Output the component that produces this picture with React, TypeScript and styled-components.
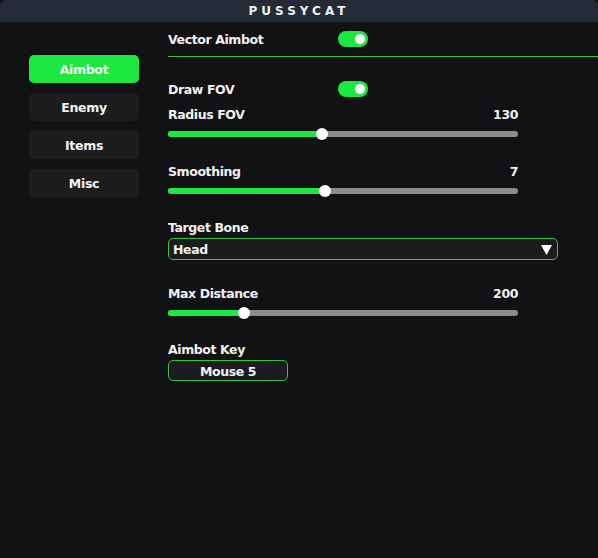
import styled, { createGlobalStyle } from "styled-components";

const GlobalStyle = createGlobalStyle`
  html, body {
    margin: 0;
    padding: 0;
    background: #121214;
  }
  body {
    font-family: "DejaVu Sans", Verdana, sans-serif;
    color: #f2f2f2;
  }
`;

const GREEN = "#1de840";

const Window = styled.div`
  width: 598px;
  height: 558px;
  display: flex;
  flex-direction: column;
  background: #121214;
  overflow: hidden;
`;

const TitleBar = styled.div`
  height: 22px;
  background: #252a37;
  border-radius: 6px 6px 0 0;
  display: flex;
  align-items: center;
  justify-content: center;
  font-size: 12px;
  font-weight: bold;
  letter-spacing: 4px;
  color: #eef0f4;
`;

const Main = styled.div`
  flex: 1;
  display: flex;
`;

const Sidebar = styled.nav`
  width: 139px;
  padding: 33px 0 0 29px;
  display: flex;
  flex-direction: column;
  gap: 10px;
`;

const TabButton = styled.div<{ $active?: boolean }>`
  width: 110px;
  height: 28px;
  padding-top: 1px;
  box-sizing: border-box;
  border-radius: 5px;
  background: ${(p) => (p.$active ? GREEN : "#1d1d1f")};
  display: flex;
  align-items: center;
  justify-content: center;
  font-size: 12.5px;
  font-weight: bold;
  letter-spacing: -0.3px;
  color: #f4f4f4;
`;

const Content = styled.div`
  flex: 1;
  padding-top: 9px;
  display: flex;
  flex-direction: column;
`;

const ToggleRow = styled.div<{ $mt?: number }>`
  margin-top: ${(p) => p.$mt ?? 0}px;
  height: 16px;
  display: flex;
  align-items: center;
`;

const Label = styled.div`
  font-size: 12.5px;
  font-weight: bold;
  letter-spacing: -0.4px;
  line-height: 16px;
  padding-top: 1px;
`;

const ToggleLabel = styled(Label)`
  width: 170px;
`;

const Toggle = styled.div`
  width: 30px;
  height: 16px;
  border-radius: 8px;
  background: ${GREEN};
  display: flex;
  align-items: center;
  justify-content: flex-end;
  padding-right: 3px;
  box-sizing: border-box;
  &::after {
    content: "";
    width: 10px;
    height: 10px;
    border-radius: 50%;
    background: #fff;
  }
`;

const Divider = styled.div`
  margin-top: 9px;
  height: 1px;
  background: #3cc44a;
`;

const Field = styled.div<{ $mt: number }>`
  margin-top: ${(p) => p.$mt}px;
  display: flex;
  flex-direction: column;
`;

const LabelRow = styled.div`
  width: 350px;
  display: flex;
  justify-content: space-between;
`;

const SliderBox = styled.div`
  margin-top: 5px;
  width: 350px;
  height: 12px;
  position: relative;
  display: flex;
  align-items: center;
`;

const Track = styled.div`
  width: 100%;
  height: 6px;
  border-radius: 3px;
  background: #8c8c8c;
  overflow: hidden;
`;

const Fill = styled.div`
  height: 100%;
  background: ${GREEN};
`;

const Knob = styled.div`
  position: absolute;
  top: 0;
  width: 12px;
  height: 12px;
  margin-left: -6px;
  border-radius: 50%;
  background: #fff;
`;

const Select = styled.div`
  margin-top: 2px;
  width: 390px;
  height: 22px;
  box-sizing: border-box;
  border: 1px solid #35c447;
  border-radius: 5px;
  background: #1c1c1e;
  display: flex;
  align-items: center;
  justify-content: space-between;
  padding: 1px 5px 0 4px;
  font-size: 12.5px;
  font-weight: bold;
  letter-spacing: -0.4px;
`;

const KeyButton = styled.div`
  margin-top: 2px;
  width: 120px;
  height: 21px;
  box-sizing: border-box;
  border: 1px solid #35c447;
  border-radius: 5px;
  background: #1c1c1e;
  display: flex;
  align-items: center;
  justify-content: center;
  padding-top: 1px;
  font-size: 12.5px;
  font-weight: bold;
  letter-spacing: -0.4px;
`;

const tabs = ["Aimbot", "Enemy", "Items", "Misc"];

const sliders = [
  { id: 1, name: "Radius FOV", value: 130, pct: 0.44, mt: 9 },
  { id: 2, name: "Smoothing", value: 7, pct: 0.449, mt: 23 },
];

function Slider({ name, value, pct, mt }: { name: string; value: number; pct: number; mt: number }) {
  return (
    <Field $mt={mt}>
      <LabelRow>
        <Label>{name}</Label>
        <Label>{value}</Label>
      </LabelRow>
      <SliderBox>
        <Track>
          <Fill style={{ width: `${pct * 100}%` }} />
        </Track>
        <Knob style={{ left: `${pct * 100}%` }} />
      </SliderBox>
    </Field>
  );
}

const App = () => {
  return (
    <Window>
      <GlobalStyle />
      <TitleBar>PUSSYCAT</TitleBar>
      <Main>
        <Sidebar>
          {tabs.map((t, i) => (
            <TabButton key={t} $active={i === 0}>
              {t}
            </TabButton>
          ))}
        </Sidebar>
        <Content>
          <ToggleRow>
            <ToggleLabel>Vector Aimbot</ToggleLabel>
            <Toggle />
          </ToggleRow>
          <Divider />
          <ToggleRow $mt={24}>
            <ToggleLabel>Draw FOV</ToggleLabel>
            <Toggle />
          </ToggleRow>
          {sliders.map((s) => (
            <Slider key={s.id} name={s.name} value={s.value} pct={s.pct} mt={s.mt} />
          ))}
          <Field $mt={22}>
            <Label>Target Bone</Label>
            <Select>
              <span>Head</span>
              <svg width="11" height="10" viewBox="0 0 11 10">
                <polygon points="0,0 11,0 5.5,10" fill="#fff" />
              </svg>
            </Select>
          </Field>
          <Slider name="Max Distance" value={200} pct={0.217} mt={25} />
          <Field $mt={22}>
            <Label>Aimbot Key</Label>
            <KeyButton>Mouse 5</KeyButton>
          </Field>
        </Content>
      </Main>
    </Window>
  );
};

export default App;
